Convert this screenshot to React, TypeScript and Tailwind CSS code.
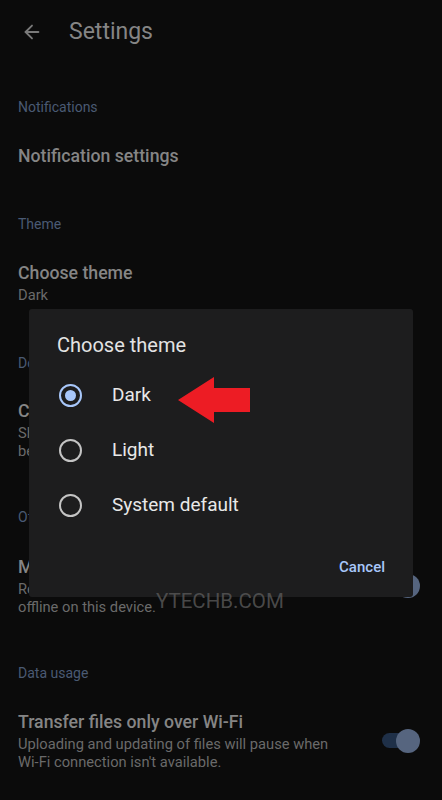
import { ArrowLeft } from "lucide-react";

interface Item {
  title: string;
  subtitle?: string[];
  toggle?: boolean;
}

interface Section {
  header: string;
  gap: string;
  titleGap: string;
  item: Item;
}

const sections: Section[] = [
  {
    header: "Notifications",
    gap: "mt-[35px]",
    titleGap: "mt-[29px]",
    item: { title: "Notification settings" },
  },
  {
    header: "Theme",
    gap: "mt-[48px]",
    titleGap: "mt-[29px]",
    item: { title: "Choose theme", subtitle: ["Dark"] },
  },
  {
    header: "Documents cache",
    gap: "mt-[51px]",
    titleGap: "mt-[28px]",
    item: {
      title: "Clear cache",
      subtitle: [
        "Shared cache will be cleared and files will",
        "be downloaded again when opened.",
      ],
    },
  },
  {
    header: "Offline",
    gap: "mt-[49px]",
    titleGap: "mt-[30px]",
    item: {
      title: "Make recent files available offline",
      subtitle: ["Recently opened files will be available", "offline on this device."],
      toggle: true,
    },
  },
  {
    header: "Data usage",
    gap: "mt-[49px]",
    titleGap: "mt-[29px]",
    item: {
      title: "Transfer files only over Wi-Fi",
      subtitle: [
        "Uploading and updating of files will pause when",
        "Wi-Fi connection isn't available.",
      ],
      toggle: true,
    },
  },
];

const options = ["Dark", "Light", "System default"];

function Toggle() {
  return (
    <div className="relative w-[38px] h-[24px] flex items-center shrink-0">
      <div className="w-[36px] h-[15px] rounded-full bg-[#1f3048]" />
      <div className="absolute right-0 top-0 w-[24px] h-[24px] rounded-full bg-[#56657f]" />
    </div>
  );
}

function Radio({ checked }: { checked: boolean }) {
  return (
    <div
      className={
        checked
          ? "w-[23px] h-[23px] rounded-full border-2 border-[#a8c7fa] flex items-center justify-center"
          : "w-[23px] h-[23px] rounded-full border-2 border-[#c4c4c4]"
      }
    >
      {checked && <div className="w-[11px] h-[11px] rounded-full bg-[#a8c7fa]" />}
    </div>
  );
}

export default function App() {
  return (
    <div
      className="relative w-[442px] h-[800px] overflow-hidden bg-[#0b0b0b]"
      style={{ fontFamily: "Roboto, 'Noto Sans', sans-serif" }}
    >
      {/* app bar */}
      <div className="h-16 flex items-center pl-[21px]">
        <ArrowLeft className="w-[22px] h-[22px] text-[#7a7a7a]" strokeWidth={2} />
        <div className="ml-[26px] text-[23px] text-[#858585]">Settings</div>
      </div>

      {/* settings list */}
      <div className="flex flex-col px-[18px]">
        {sections.map((s) => (
          <div key={s.header} className={s.gap}>
            <div className="text-[14px] leading-4 text-[#4a5a73]">{s.header}</div>
            <div className={`${s.titleGap} flex items-center justify-between`}>
              <div>
                <div className="text-[17.7px] leading-6 font-medium text-[#858585]">
                  {s.item.title}
                </div>
                {s.item.subtitle && (
                  <div className="mt-[1px] text-[14.7px] leading-[18px] text-[#6a6a6a]">
                    {s.item.subtitle.map((l) => (
                      <div key={l}>{l}</div>
                    ))}
                  </div>
                )}
              </div>
              {s.item.toggle && (
                <div className="mr-[4px]">
                  <Toggle />
                </div>
              )}
            </div>
          </div>
        ))}
      </div>

      {/* dialog */}
      <div className="absolute left-[29px] top-[309px] w-[384px] h-[288px] rounded-[3px] bg-[#1d1d1e] flex flex-col">
        <div className="pt-[24px] pl-[28px] text-[20px] leading-6 text-[#e3e3e3]">
          Choose theme
        </div>
        <div className="mt-[11px] flex flex-col">
          {options.map((o, i) => (
            <div key={o} className="h-[55px] flex items-center pl-[30px]">
              <Radio checked={i === 0} />
              <div className="ml-[30px] text-[19px] text-[#e8e8e8]">{o}</div>
            </div>
          ))}
        </div>
        <div className="mt-auto mb-[19px] mr-[28px] self-end text-[15px] font-medium text-[#a8c7fa]">
          Cancel
        </div>
      </div>

      {/* red arrow annotation */}
      <svg className="absolute left-0 top-0" width="442" height="800" viewBox="0 0 442 800">
        <polygon
          points="178,400 214,377 214,388 250,388 250,412 214,412 214,423"
          fill="#ed1c24"
        />
      </svg>

      {/* watermark */}
      <div className="absolute left-[156px] top-[587px] text-[20.5px] leading-7 text-[#5a5a5a]/80">
        YTECHB.COM
      </div>
    </div>
  );
}
